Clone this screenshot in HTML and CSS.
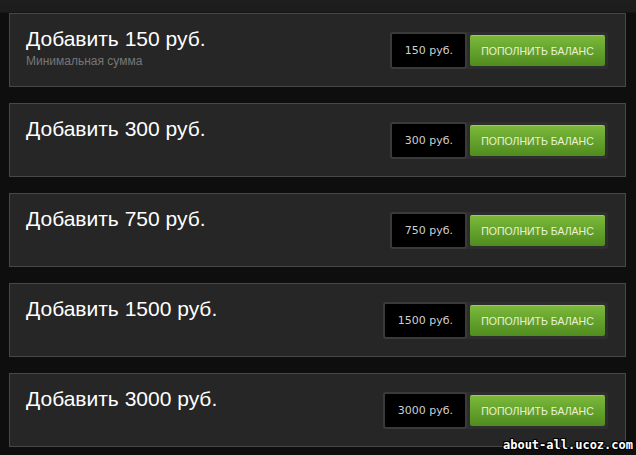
FILE: index.html
```html
<!DOCTYPE html>
<html lang="ru">
<head>
  <meta charset="UTF-8">
  <title>Пополнение баланса</title>
  <link rel="stylesheet" href="styles.css">
</head>
<body>
<div class="list">
  <div class="card">
    <div class="info">
      <div class="title">Добавить 150 руб.</div>
      <div class="note">Минимальная сумма</div>
    </div>
    <div class="pay">
      <div class="amount">150 руб.</div>
      <button class="btn">Пополнить баланс</button>
    </div>
  </div>

  <div class="card">
    <div class="info">
      <div class="title">Добавить 300 руб.</div>
    </div>
    <div class="pay">
      <div class="amount">300 руб.</div>
      <button class="btn">Пополнить баланс</button>
    </div>
  </div>

  <div class="card">
    <div class="info">
      <div class="title">Добавить 750 руб.</div>
    </div>
    <div class="pay">
      <div class="amount">750 руб.</div>
      <button class="btn">Пополнить баланс</button>
    </div>
  </div>

  <div class="card">
    <div class="info">
      <div class="title">Добавить 1500 руб.</div>
    </div>
    <div class="pay">
      <div class="amount">1500 руб.</div>
      <button class="btn">Пополнить баланс</button>
    </div>
  </div>

  <div class="card">
    <div class="info">
      <div class="title">Добавить 3000 руб.</div>
    </div>
    <div class="pay">
      <div class="amount">3000 руб.</div>
      <button class="btn">Пополнить баланс</button>
    </div>
  </div>
</div>

<div class="watermark">about-all.ucoz.com</div>
</body>
</html>
```

FILE: styles.css
```css
html, body {
  margin: 0;
  height: 100%;
}
body {
  font-family: "Liberation Sans", Arial, sans-serif;
  background: linear-gradient(to bottom, #1e1e1e 0, #1c1c1c 12px, #0e0e0e 13px);
  overflow: hidden;
  position: relative;
}
.list {
  display: flex;
  flex-direction: column;
  gap: 16px;
  padding: 13px 0 0 9px;
  width: 617px;
}
.card {
  height: 74px;
  box-sizing: border-box;
  background: #262626;
  border: 1px solid #484848;
  display: flex;
  justify-content: space-between;
  align-items: center;
  padding: 0 17px 0 16px;
}
.info {
  align-self: flex-start;
  padding-top: 13px;
}
.title {
  color: #fff;
  font-size: 21px;
  line-height: 24px;
}
.note {
  color: #777;
  font-size: 12px;
  line-height: 14px;
  margin-top: 3px;
}
.pay {
  display: flex;
  align-items: center;
  gap: 3px;
  background: #2e2e2e;
  border-radius: 3px;
  padding-right: 3px;
}
.amount {
  background: #000;
  border: 2px solid #3a3a3a;
  border-radius: 3px;
  height: 33px;
  line-height: 33px;
  padding: 0 12px 0 13px;
  color: #cfcfcf;
  font-family: "DejaVu Sans", Tahoma, sans-serif;
  font-size: 11px;
}
.btn {
  width: 135px;
  height: 31px;
  border: 0;
  border-top: 1px solid #9ccd5c;
  border-radius: 2px;
  background: linear-gradient(to bottom, #7bb83a, #4f8c1f);
  color: #e6f3d6;
  font-family: "Liberation Sans", Arial, sans-serif;
  font-size: 10.5px;
  text-transform: uppercase;
  padding: 0;
}
.watermark {
  position: absolute;
  right: 3px;
  bottom: 3px;
  color: #fff;
  font-family: "DejaVu Sans Mono", monospace;
  font-weight: bold;
  font-size: 12px;
  text-shadow: 1px 0 #000, -1px 0 #000, 0 1px #000, 0 -1px #000, 1px 1px #000, -1px -1px #000, 1px -1px #000, -1px 1px #000;
}
```
